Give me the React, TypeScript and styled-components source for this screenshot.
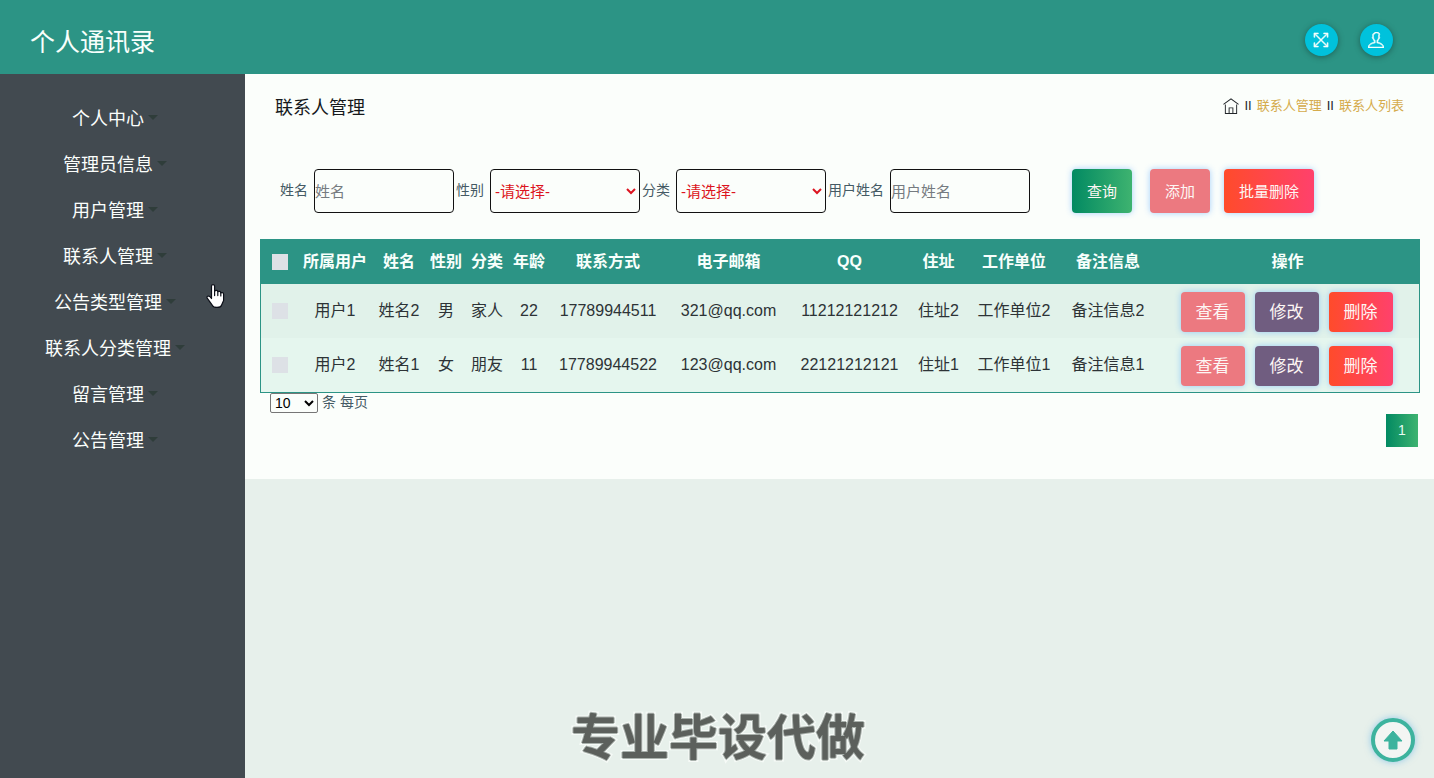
import React from "react";
import styled, { createGlobalStyle, css } from "styled-components";
import { TfiFullscreen, TfiHome, TfiUser } from "react-icons/tfi";

const GlobalStyle = createGlobalStyle`
  *, *::before, *::after { box-sizing: border-box; }
  body {
    margin: 0;
    background: #e7f0eb;
    color: #455a64;
    font-family: "Liberation Sans", "Noto Sans CJK SC", sans-serif;
    font-size: 14px;
  }
  button, input, select { font-family: inherit; }
`;

const Page = styled.div`
  display: flex;
  flex-direction: column;
  min-height: 100vh;
`;

const Header = styled.header`
  display: flex;
  align-items: center;
  justify-content: space-between;
  height: 74px;
  padding: 6px 41px 0 30px;
  background: #2c9485;
`;

const Brand = styled.h1`
  margin: 0;
  padding-top: 3px;
  font-size: 25px;
  font-weight: 400;
  line-height: 36px;
  color: #f8fffc;
`;

const HeaderActions = styled.div`
  display: flex;
  gap: 22px;
`;

const RoundButton = styled.button`
  display: flex;
  align-items: center;
  justify-content: center;
  width: 33px;
  height: 32px;
  padding: 0 1px 0 0;
  border: 0;
  border-radius: 50%;
  background: #00c2dc;
  color: #f4fffc;
  font-size: 16px;
  box-shadow: 0 1px 6px rgba(0, 0, 0, 0.35);

  svg {
    stroke: currentColor;
    stroke-width: 0.6;
  }
`;

const Body = styled.div`
  display: flex;
  flex: 1;
`;

const Sidebar = styled.nav`
  flex: 0 0 245px;
  padding: 21px 15px 0 0;
  background: #424a50;
`;

const NavList = styled.ul`
  margin: 0;
  padding: 0;
  list-style: none;
`;

const NavButton = styled.button`
  display: flex;
  align-items: center;
  justify-content: center;
  gap: 4px;
  width: 100%;
  height: 46px;
  padding: 1px 0 0;
  border: 0;
  background: none;
  color: #fbfefc;
  font-size: 18px;
  line-height: 26px;

  &::after {
    content: "";
    margin-bottom: 2px;
    border: 5px solid transparent;
    border-top-color: #2f3d3a;
    border-bottom: 0;
  }
`;

const Main = styled.main`
  flex: 1;
  min-width: 0;
`;

const Panel = styled.section`
  padding: 15px 15px 32px;
  background: #fbfefb;
`;

const TitleBar = styled.div`
  display: flex;
  align-items: center;
  justify-content: space-between;
  padding: 0 15px;
  height: 36px;
`;

const Title = styled.h2`
  margin: 0;
  padding-top: 2px;
  font-size: 18px;
  font-weight: 400;
  line-height: 26px;
  color: #16191c;
`;

const Breadcrumb = styled.nav`
  display: flex;
  align-items: center;
  gap: 5px;
  padding-bottom: 2px;
  font-size: 13px;
  line-height: 20px;
  color: #212529;
`;

const Crumb = styled.a`
  display: flex;
  color: #d5ab4c;
  text-decoration: none;
`;

const HomeCrumb = styled(Crumb)`
  margin-right: 1px;
  color: #212529;
  font-size: 16px;
`;

const SearchForm = styled.form`
  display: flex;
  align-items: center;
  margin-top: 44px;
  padding-left: 20px;
`;

const Field = styled.label`
  display: flex;
  align-items: center;
  gap: 6px;
  margin-right: 2px;
  line-height: 20px;
  white-space: nowrap;
`;

const FieldName = styled.span`
  padding-bottom: 2px;
`;

const control = css`
  height: 44px;
  border: 1px solid #111;
  border-radius: 4px;
  background: transparent;
  font-size: 15px;
`;

const TextInput = styled.input`
  ${control}
  width: 140px;
  padding: 0;
  &::placeholder { color: #757b80; }
`;

const Choice = styled.select`
  ${control}
  width: 150px;
  padding: 0;
  color: #dc1420;
`;

const tones = {
  green: "linear-gradient(90deg, #028a62, #3eb370)",
  pink: "#ec7980",
  purple: "#705d80",
  red: "linear-gradient(90deg, #ff4b2b, #ff416c)",
};

const Button = styled.button<{ $tone: keyof typeof tones; $small?: boolean }>`
  height: ${(p) => (p.$small ? 40 : 44)}px;
  padding: 0 15px ${(p) => (p.$small ? 4 : 2)}px;
  border: 0;
  border-radius: 4px;
  background: ${(p) => tones[p.$tone]};
  color: #fdf6f4;
  font-size: ${(p) => (p.$small ? 17 : 15)}px;
  white-space: nowrap;
  box-shadow: 0 0 6px rgba(60, 150, 255, 0.45);
`;

const FormActions = styled.div`
  display: flex;
  gap: 14px;
  margin-left: 40px;
`;

const SearchAction = styled.div`
  margin-right: 4px;
`;

const Table = styled.table`
  width: 100%;
  margin-top: 26px;
  border: 1px solid #2c9485;
  border-spacing: 0;
  table-layout: fixed;
  font-size: 16px;
  line-height: 24px;
  text-align: center;
  color: #2d3336;
`;

const HeadCell = styled.th`
  height: 44px;
  padding: 0;
  background: #2c9485;
  color: #f8fffc;
  white-space: nowrap;
`;

const Row = styled.tr`
  background: #e5f6ee;
  &:nth-child(odd) { background: #e1f2ea; }
`;

const Cell = styled.td`
  height: 54px;
  padding: 0;
  white-space: nowrap;
`;

const Tick = styled.input`
  display: block;
  width: 16px;
  height: 16px;
  margin: 0 auto;
  appearance: none;
  background: #dde1e6;
`;

const RowActions = styled.div`
  display: flex;
  justify-content: center;
  gap: 10px;
  padding: 2px 2px 0 0;
`;

const PageSize = styled.label`
  display: flex;
  align-items: center;
  gap: 4px;
  height: 20px;
  padding-left: 10px;
  line-height: 20px;
`;

const SizeSelect = styled.select`
  width: 48px;
  height: 20px;
  padding: 0;
  border: 1px solid #767676;
  border-radius: 2px;
  background: transparent;
  color: #000;
  font-size: 14px;
`;

const Pager = styled.div`
  display: flex;
  justify-content: flex-end;
  margin-top: 1px;
  padding-right: 1px;
`;

const PageButton = styled.button`
  width: 32px;
  height: 33px;
  padding: 0 0 2px;
  border: 0;
  background: ${tones.green};
  color: #e9fbf2;
  font-size: 14px;
`;

const Caption = styled.div`
  position: fixed;
  right: 0;
  bottom: 5px;
  left: 2px;
  color: #5c605c;
  font-size: 49px;
  font-weight: 700;
  line-height: 70px;
  text-align: center;
  pointer-events: none;
  paint-order: stroke fill;
  -webkit-text-stroke: 4px #f6faf7;
  text-shadow: 1px 0 #a9b1ac, -1px 0 #a9b1ac, 0 1px #a9b1ac, 0 -1px #a9b1ac;
`;

const ToTop = styled.button`
  position: fixed;
  right: 19px;
  bottom: 16px;
  display: flex;
  align-items: center;
  justify-content: center;
  width: 44px;
  height: 44px;
  padding: 0;
  border: 4px solid #3db39e;
  border-radius: 50%;
  background: #f3f5f3;
  box-shadow: 0 0 7px rgba(60, 160, 230, 0.5);
`;

const Pointer = styled.svg`
  position: absolute;
  top: 284px;
  left: 206px;
  pointer-events: none;
`;

const menu = [
  "个人中心",
  "管理员信息",
  "用户管理",
  "联系人管理",
  "公告类型管理",
  "联系人分类管理",
  "留言管理",
  "公告管理",
];

const columns = [
  { name: "所属用户", width: 72 },
  { name: "姓名", width: 56 },
  { name: "性别", width: 38 },
  { name: "分类", width: 44 },
  { name: "年龄", width: 40 },
  { name: "联系方式", width: 118 },
  { name: "电子邮箱", width: 123 },
  { name: "QQ", width: 119 },
  { name: "住址", width: 59 },
  { name: "工作单位", width: 92 },
  { name: "备注信息", width: 96 },
  { name: "操作", width: 263 },
];

const contacts = [
  ["用户1", "姓名2", "男", "家人", "22", "17789944511", "321@qq.com", "11212121212", "住址2", "工作单位2", "备注信息2"],
  ["用户2", "姓名1", "女", "朋友", "11", "17789944522", "123@qq.com", "22121212121", "住址1", "工作单位1", "备注信息1"],
];

export default function App() {
  return (
    <Page>
      <GlobalStyle />
      <Header>
        <Brand>个人通讯录</Brand>
        <HeaderActions>
          <RoundButton type="button" aria-label="全屏"><TfiFullscreen /></RoundButton>
          <RoundButton type="button" aria-label="用户"><TfiUser /></RoundButton>
        </HeaderActions>
      </Header>
      <Body>
        <Sidebar>
          <NavList>
            {menu.map((item) => (
              <li key={item}><NavButton type="button">{item}</NavButton></li>
            ))}
          </NavList>
        </Sidebar>
        <Main>
          <Panel>
            <TitleBar>
              <Title>联系人管理</Title>
              <Breadcrumb>
                <HomeCrumb href="#home" aria-label="首页"><TfiHome /></HomeCrumb>
                <span>II</span>
                <Crumb href="#contacts">联系人管理</Crumb>
                <span>II</span>
                <Crumb href="#list">联系人列表</Crumb>
              </Breadcrumb>
            </TitleBar>
            <SearchForm onSubmit={(e) => e.preventDefault()}>
              <Field><FieldName>姓名</FieldName><TextInput placeholder="姓名" /></Field>
              <Field>
                <FieldName>性别</FieldName>
                <Choice><option>-请选择-</option><option>男</option><option>女</option></Choice>
              </Field>
              <Field>
                <FieldName>分类</FieldName>
                <Choice><option>-请选择-</option><option>家人</option><option>朋友</option></Choice>
              </Field>
              <Field><FieldName>用户姓名</FieldName><TextInput placeholder="用户姓名" /></Field>
              <FormActions>
                <SearchAction><Button type="submit" $tone="green">查询</Button></SearchAction>
                <Button type="button" $tone="pink">添加</Button>
                <Button type="button" $tone="red">批量删除</Button>
              </FormActions>
            </SearchForm>
            <Table>
              <colgroup>
                <col width={38} />
                {columns.map((c) => <col key={c.name} width={c.width} />)}
              </colgroup>
              <thead>
                <tr>
                  <HeadCell><Tick type="checkbox" aria-label="全选" /></HeadCell>
                  {columns.map((c) => <HeadCell key={c.name}>{c.name}</HeadCell>)}
                </tr>
              </thead>
              <tbody>
                {contacts.map((row) => (
                  <Row key={row[0]}>
                    <Cell><Tick type="checkbox" aria-label={row[0]} /></Cell>
                    {row.map((value, i) => <Cell key={columns[i].name}>{value}</Cell>)}
                    <Cell>
                      <RowActions>
                        <Button type="button" $tone="pink" $small>查看</Button>
                        <Button type="button" $tone="purple" $small>修改</Button>
                        <Button type="button" $tone="red" $small>删除</Button>
                      </RowActions>
                    </Cell>
                  </Row>
                ))}
              </tbody>
            </Table>
            <PageSize>
              <SizeSelect><option>10</option><option>25</option><option>50</option></SizeSelect>
              <FieldName>条 每页</FieldName>
            </PageSize>
            <Pager><PageButton type="button">1</PageButton></Pager>
          </Panel>
        </Main>
      </Body>
      <Caption>专业毕设代做</Caption>
      <ToTop type="button" aria-label="返回顶部">
        <svg width="20" height="20" viewBox="0 0 20 20" fill="#3db39e" stroke="#3db39e" strokeWidth="1" strokeLinejoin="round">
          <path d="M10 1 L19 11 H14 V19 H6 V11 H1 Z" />
        </svg>
      </ToTop>
      <Pointer width="19" height="25" viewBox="0 0 19 25" fill="#fff" stroke="#0c0f18" strokeWidth="1.2" strokeLinejoin="round" strokeLinecap="round" aria-hidden="true">
        <path d="M5.5 14.5 V2 Q5.5 .6 7 .6 Q8.6 .6 8.6 2 V7 Q11.4 5.6 11.8 7.6 Q14.4 6.6 14.8 8.8 Q17.6 8 17.6 10.6 V16.5 L15.6 21 Q15 23.4 11 23.4 Q7.4 23.4 6.4 21.4 L1.2 14.2 Q.4 12 2.6 12 Q4 12.2 5.5 14.5 Z" />
        <path d="M8.6 7 V11.6 M11.8 7.6 V11.6 M14.8 8.8 V12" fill="none" />
      </Pointer>
    </Page>
  );
}
